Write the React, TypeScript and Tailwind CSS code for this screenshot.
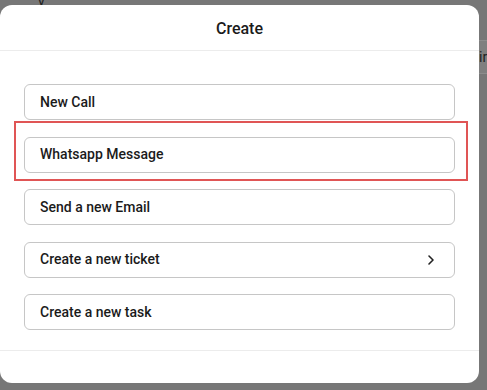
import React from 'react';

const ACTIONS = [
  { label: 'New Call' },
  { label: 'Whatsapp Message' },
  { label: 'Send a new Email' },
  { label: 'Create a new ticket', sub: true },
  { label: 'Create a new task' },
];

function Chevron() {
  return (
    <svg width="10" height="12" viewBox="0 0 10 12" fill="none" className="text-[#222]">
      <path d="M3 2l4 4-4 4" stroke="currentColor" strokeWidth="1.6" strokeLinecap="round" strokeLinejoin="round" />
    </svg>
  );
}

export default function App() {
  return (
    <div
      className="relative w-[487px] h-[390px] overflow-hidden bg-[#777777]"
      style={{ fontFamily: 'Roboto, "Liberation Sans", sans-serif' }}
    >
      {/* page behind the overlay */}
      <div className="absolute left-[479px] top-[40px] w-[20px] h-[34px] bg-[#7f7f7f] border-y border-[#8c8c8c] flex items-center text-[14px] text-[#222]">
        ir
      </div>
      <div className="absolute left-[38px] top-[-9px] text-[14px] text-[#222]">y</div>

      <div className="pt-[5px]">
        {/* Modal */}
        <div className="relative w-[479px] h-[378px] bg-white rounded-xl flex flex-col">
          <div className="h-[46px] pt-[3px] flex items-center justify-center border-b border-[#ececec]">
            <h2 className="text-[16px] font-medium text-[#1b1b1b]">Create</h2>
          </div>

          <div className="px-6 pt-[33px] pb-[20px] flex flex-col gap-[16.5px] border-b border-[#ececec]">
            {ACTIONS.map(a => (
              <button
                key={a.label}
                className="h-9 w-full rounded-md border border-[#c6c6c6] bg-white pl-[15px] pr-4 flex items-center justify-between text-left"
              >
                <span className="text-[14px] font-medium text-[#1b1b1b]">{a.label}</span>
                {a.sub && <span className="mr-[2px]"><Chevron /></span>}
              </button>
            ))}
          </div>

          <div className="flex-1" />
        </div>
      </div>

      {/* highlight annotation */}
      <div className="absolute left-[14px] top-[121px] w-[454px] h-[60px] border-2 border-[#e05555] pointer-events-none" />
    </div>
  );
}
